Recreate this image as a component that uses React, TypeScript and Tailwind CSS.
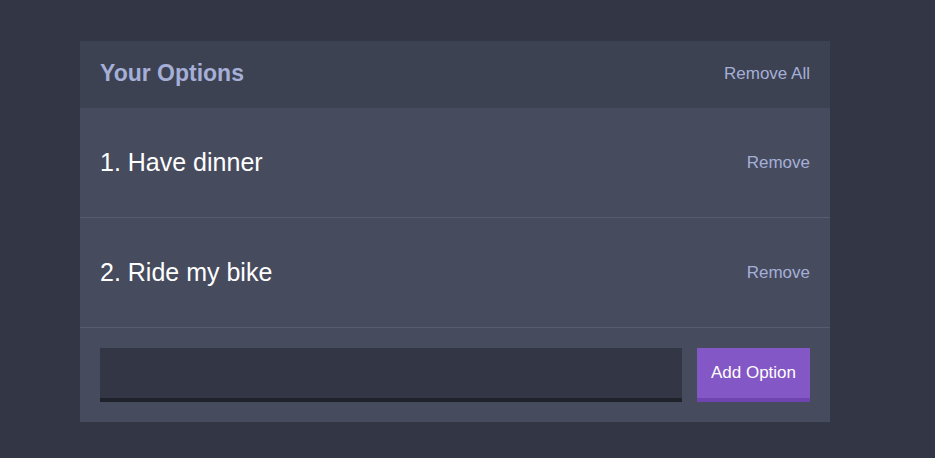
const options = ["Have dinner", "Ride my bike"];

export default function App() {
  return (
    <div
      className="w-[935px] h-[458px] bg-[#333745] pt-[41px]"
      style={{ fontFamily: '"Liberation Sans", Arial, sans-serif' }}
    >
      <div className="w-[750px] ml-[80px] bg-[#464b5e]">
        <div className="h-[67px] bg-[#3c4251] flex items-center justify-between px-5 pb-[2px]">
          <h3 className="text-[23px] font-bold text-[#a5afd7]">Your Options</h3>
          <button className="text-[17px] text-[#a5afd7]">Remove All</button>
        </div>
        {options.map((opt, i) => (
          <div
            key={opt}
            className="h-[110px] border-b border-[#575d6e] flex items-center justify-between px-5"
          >
            <p className="text-[25px] text-white">
              {i + 1}. {opt}
            </p>
            <button className="text-[17px] text-[#a5afd7]">Remove</button>
          </div>
        ))}
        <form className="flex gap-[15px] p-5">
          <input className="flex-1 h-[54px] bg-[#333745] border-b-4 border-[#20222b] outline-none text-white px-3" />
          <button
            type="button"
            className="w-[113px] h-[54px] bg-[#8357c5] border-b-4 border-[#6f44b0] text-white text-[17px]"
          >
            Add Option
          </button>
        </form>
      </div>
    </div>
  );
}
